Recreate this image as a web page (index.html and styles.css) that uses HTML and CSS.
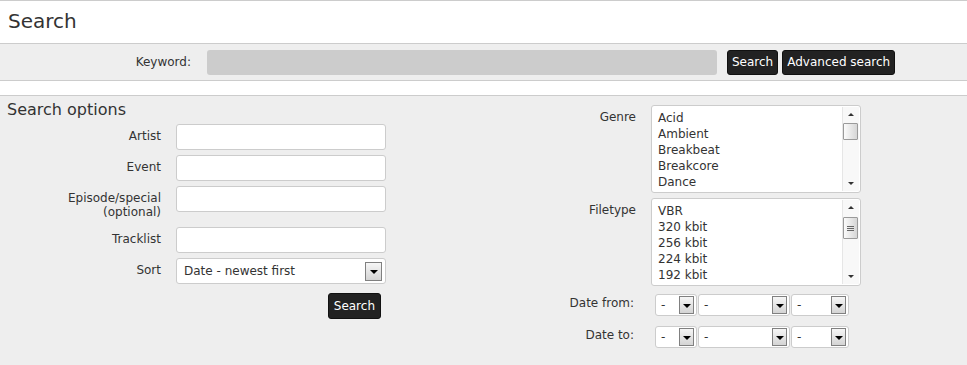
FILE: index.html
```html
<!DOCTYPE html>
<html>
<head>
<meta charset="utf-8">
<title>Search</title>
<link rel="stylesheet" href="styles.css">
</head>
<body>
<header class="top"><h1 class="title">Search</h1></header>
<div class="keybar">
  <label class="kw-label">Keyword:</label>
  <input class="kw-input" type="text">
  <div class="kw-buttons">
    <button class="btn">Search</button>
    <button class="btn">Advanced search</button>
  </div>
</div>
<div class="spacer"></div>
<main class="options">
  <section class="col-left">
    <h2 class="subtitle">Search options</h2>
    <div class="form">
      <label class="lbl">Artist</label><input class="field" type="text">
      <label class="lbl">Event</label><input class="field" type="text">
      <label class="lbl lbl-tall">Episode/special<br>(optional)</label><input class="field" type="text">
      <label class="lbl">Tracklist</label><input class="field" type="text">
      <label class="lbl">Sort</label>
      <div class="sel sel-sort"><span class="sel-text">Date - newest first</span><i class="arrow"></i></div>
      <div></div>
      <div class="submit-row"><button class="btn btn-submit">Search</button></div>
    </div>
  </section>
  <section class="col-right">
    <div class="form-r">
      <label class="lbl">Genre</label>
      <div class="listbox">
        <ul class="items">
          <li>Acid</li><li>Ambient</li><li>Breakbeat</li><li>Breakcore</li><li>Dance</li>
        </ul>
        <div class="sbar">
          <div class="sb-btn"><i class="tri-up"></i></div>
          <div class="sb-track"><div class="thumb thumb-genre"></div></div>
          <div class="sb-btn"><i class="tri-down"></i></div>
        </div>
      </div>
      <label class="lbl">Filetype</label>
      <div class="listbox">
        <ul class="items">
          <li>VBR</li><li>320 kbit</li><li>256 kbit</li><li>224 kbit</li><li>192 kbit</li>
        </ul>
        <div class="sbar">
          <div class="sb-btn"><i class="tri-up"></i></div>
          <div class="sb-track"><div class="thumb thumb-file"><span></span><span></span><span></span></div></div>
          <div class="sb-btn"><i class="tri-down"></i></div>
        </div>
      </div>
      <label class="lbl lbl-date lbl-from">Date from:</label>
      <div class="dates dates-from">
        <div class="sel sel-d sel-day"><span class="sel-text">-</span><i class="arrow"></i></div>
        <div class="sel sel-d sel-month"><span class="sel-text">-</span><i class="arrow"></i></div>
        <div class="sel sel-d sel-year"><span class="sel-text">-</span><i class="arrow"></i></div>
      </div>
      <label class="lbl lbl-date lbl-to">Date to:</label>
      <div class="dates dates-to">
        <div class="sel sel-d sel-day"><span class="sel-text">-</span><i class="arrow"></i></div>
        <div class="sel sel-d sel-month"><span class="sel-text">-</span><i class="arrow"></i></div>
        <div class="sel sel-d sel-year"><span class="sel-text">-</span><i class="arrow"></i></div>
      </div>
    </div>
  </section>
</main>
</body>
</html>
```
FILE: styles.css
```css
* { box-sizing: border-box; }
html, body { margin: 0; padding: 0; }
body {
  font-family: "DejaVu Sans", Verdana, sans-serif;
  font-size: 12px;
  color: #333;
  background: #eeeeee;
  min-height: 365px;
}
.top {
  background: #fff;
  border-top: 1px solid #cccccc;
  border-bottom: 1px solid #cccccc;
  height: 44px;
}
.title {
  margin: 0;
  padding-left: 8px;
  font-size: 20px;
  font-weight: normal;
  line-height: 41px;
  color: #333;
}
.keybar {
  background: #eeeeee;
  height: 37px;
  border-bottom: 1px solid #cccccc;
  display: flex;
  align-items: center;
}
.kw-label {
  width: 191px;
  text-align: right;
  margin-right: 16px;
}
.kw-input {
  width: 510px;
  height: 25px;
  border: none;
  border-radius: 3px;
  background: #cccccc;
  margin: 0;
}
.kw-buttons {
  display: flex;
  gap: 4px;
  margin-left: 10px;
}
.btn {
  font-family: "DejaVu Sans", Verdana, sans-serif;
  font-size: 12px;
  color: #fff;
  background: #222222;
  border: 1px solid #111;
  border-radius: 3px;
  height: 25px;
  padding: 0 4px;
  margin: 0;
  line-height: 21px;
}
.spacer {
  background: #fff;
  height: 15px;
  border-bottom: 1px solid #cccccc;
}
.options {
  display: flex;
  background: #eeeeee;
}
.col-left { width: 483px; }
.subtitle {
  margin: 4px 0 5px 7px;
  font-size: 16px;
  font-weight: normal;
  line-height: 19px;
  color: #333;
}
.form {
  display: grid;
  grid-template-columns: 161px 210px;
  column-gap: 15px;
  row-gap: 5px;
  align-items: start;
}
.lbl {
  text-align: right;
  line-height: 14px;
  padding: 5px 0 3px;
}
.field {
  width: 210px;
  height: 26px;
  margin: 0;
  border: 1px solid #cccccc;
  border-radius: 3px;
  background: #fff;
}
.sel {
  display: flex;
  align-items: center;
  background: #fff;
  border: 1px solid #cccccc;
  border-radius: 3px;
}
.sel-text { padding-left: 7px; flex: 1; }
.sel-sort { width: 210px; height: 26px; }
.sel-sort .arrow { width: 17px; height: 19px; margin-right: 3px; }
.arrow {
  display: flex;
  align-items: center;
  justify-content: center;
  border: 1px solid #808080;
  background: linear-gradient(#f6f6f6, #d4d4d4);
}
.arrow::before {
  content: "";
  border-left: 4px solid transparent;
  border-right: 4px solid transparent;
  border-top: 4px solid #000;
  margin-top: 1px;
}
.submit-row {
  display: flex;
  justify-content: flex-end;
  padding-right: 5px;
  margin-top: 4px;
}
.btn-submit { height: 26px; padding: 0 5px; }

.col-right { flex: 1; padding-top: 9px; }
.form-r {
  display: grid;
  grid-template-columns: 153px 210px;
  column-gap: 15px;
  row-gap: 5px;
  align-items: start;
}
.listbox {
  width: 210px;
  height: 88px;
  background: #fff;
  border: 1px solid #cccccc;
  border-radius: 3px;
  display: flex;
  overflow: hidden;
}
.items {
  list-style: none;
  margin: 0;
  padding: 4px 0 0 6px;
  flex: 1;
  line-height: 16px;
}
.sbar {
  width: 17px;
  margin: 1px 1px 1px 0;
  border-left: 1px solid #e6e6e6;
  background: #f8f8f8;
  display: flex;
  flex-direction: column;
}
.sb-btn {
  height: 15px;
  display: flex;
  align-items: center;
  justify-content: center;
}
.tri-up {
  border-left: 3px solid transparent;
  border-right: 3px solid transparent;
  border-bottom: 3px solid #333;
}
.tri-down {
  border-left: 3px solid transparent;
  border-right: 3px solid transparent;
  border-top: 3px solid #333;
}
.sb-track { flex: 1; }
.thumb {
  width: 15px;
  border: 1px solid #9a9a9a;
  border-radius: 1px;
  background: linear-gradient(90deg, #fbfbfb, #d6d6d6);
}
.thumb-genre { height: 17px; margin-top: 1px; }
.thumb-file {
  height: 22px;
  margin-top: 2px;
  display: flex;
  flex-direction: column;
  align-items: center;
  justify-content: center;
  gap: 1px;
}
.thumb-file span {
  width: 7px;
  height: 1px;
  background: #666;
}
.lbl-date { padding-right: 2px; }
.lbl-from { padding-top: 5px; }
.lbl-to { padding-top: 3px; margin-top: 4px; }
.dates {
  display: flex;
  gap: 1px;
  margin-left: 4px;
}
.dates-from { margin-top: 3px; }
.dates-to { margin-top: 5px; }
.sel-d { height: 22px; }
.sel-d .sel-text { padding-left: 5px; }
.sel-d .arrow { width: 15px; height: 18px; margin-right: 2px; }
.sel-day { width: 42px; }
.sel-month { width: 92px; }
.sel-year { width: 58px; }
```
